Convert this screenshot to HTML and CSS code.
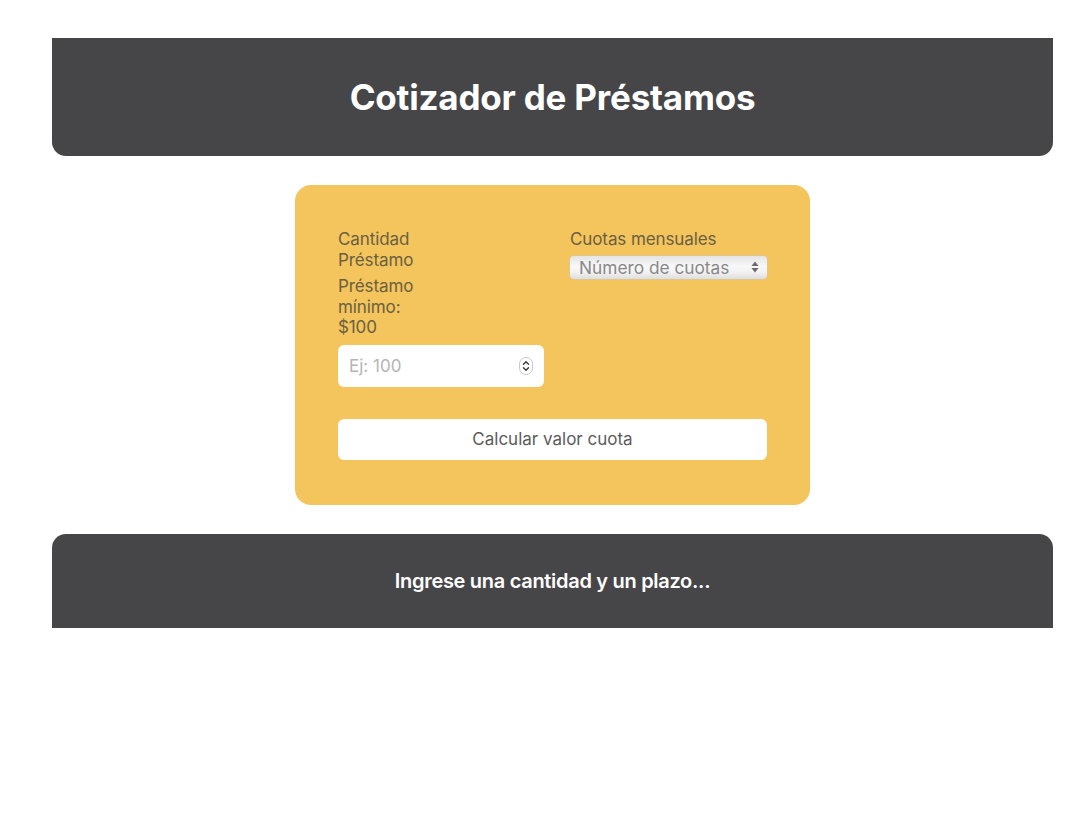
FILE: index.html
```html
<!DOCTYPE html>
<html lang="es">
<head>
<meta charset="utf-8">
<title>Cotizador de Préstamos</title>
<link rel="stylesheet" href="styles.css">
</head>
<body>
<div class="page">
  <header class="header">
    <h1 class="title">Cotizador de Préstamos</h1>
  </header>
  <main class="main">
    <form class="card">
      <div class="fields">
        <div class="col col-left">
          <label class="label">Cantidad Préstamo</label>
          <p class="label hint">Préstamo mínimo: $100</p>
          <div class="input">
            <input class="input-field" type="text" placeholder="Ej: 100">
            <svg class="spin" width="14" height="18" viewBox="0 0 14 18"><rect x="0.5" y="0.5" width="13" height="17" rx="6.5" fill="#fff" stroke="#c9c9c9"/><path d="M4.5 7.2 7 4.8 9.5 7.2" fill="none" stroke="#333" stroke-width="1.3" stroke-linecap="round" stroke-linejoin="round"/><path d="M4.5 10.8 7 13.2 9.5 10.8" fill="none" stroke="#333" stroke-width="1.3" stroke-linecap="round" stroke-linejoin="round"/></svg>
          </div>
        </div>
        <div class="col col-right">
          <label class="label">Cuotas mensuales</label>
          <div class="select">
            <span class="select-text">Número de cuotas</span>
            <svg class="select-arrows" width="8" height="12" viewBox="0 0 8 12"><path d="M4 0.5 7.5 5H0.5Z" fill="#6a6a6a"/><path d="M4 11.5 7.5 7H0.5Z" fill="#6a6a6a"/></svg>
          </div>
        </div>
      </div>
      <button class="button" type="button">Calcular valor cuota</button>
    </form>
  </main>
  <footer class="result">
    <p class="result-text">Ingrese una cantidad y un plazo...</p>
  </footer>
</div>
</body>
</html>
```
FILE: styles.css
```css
* { box-sizing: border-box; }
html, body { margin: 0; padding: 0; background: #fff; }
body { font-family: Inter, "Noto Sans", "Liberation Sans", sans-serif; }

.page {
  width: 1001px;
  margin-left: 52px;
  padding-top: 38px;
  display: flex;
  flex-direction: column;
  align-items: center;
}

.header {
  width: 100%;
  height: 118px;
  background: #464547;
  border-radius: 0 0 14px 14px;
  display: flex;
  align-items: center;
  justify-content: center;
}
.title {
  margin: 0;
  color: #fff;
  font-size: 35px;
  font-weight: 700;
  letter-spacing: -0.2px;
  position: relative;
  top: 0;
}

.main {
  padding: 29px 0;
  display: flex;
  justify-content: center;
  width: 100%;
}

.card {
  width: 515px;
  background: #f4c45d;
  border-radius: 16px;
  padding: 44px 43px 45px 43px;
  margin: 0;
  display: flex;
  flex-direction: column;
  gap: 32px;
}

.fields {
  display: flex;
  gap: 26px;
}
.col { display: flex; flex-direction: column; }
.col-left { width: 206px; }
.col-right { width: 197px; }

.label {
  margin: 0;
  font-size: 17px;
  line-height: 20.5px;
  color: #6a6042;
  width: 100px;
  letter-spacing: -0.1px;
}
.col-right .label { width: auto; }
.hint { margin-top: 6px; }

.input {
  margin-top: 7px;
  height: 42px;
  background: #fff;
  border-radius: 6px;
  display: flex;
  align-items: center;
  padding: 0 11px 0 11px;
}
.input-field {
  flex: 1;
  min-width: 0;
  border: 0;
  outline: 0;
  background: transparent;
  font-family: inherit;
  font-size: 17px;
  color: #333;
  padding: 0;
}
.input-field::placeholder { color: #b5b5b5; }
.spin { flex: none; }

.select {
  margin-top: 6px;
  height: 23px;
  border-radius: 4px;
  background: linear-gradient(#e4e4e4, #f8f8f8 45%, #f2f2f2 70%, #dedede);
  box-shadow: 0 0 0 0.5px #c8c8c8;
  display: flex;
  align-items: center;
  justify-content: space-between;
  padding: 0 8px 0 9px;
}
.select-text {
  font-size: 17.3px;
  color: #888;
}

.button {
  height: 41px;
  border: 0;
  border-radius: 6px;
  background: #fff;
  font-family: inherit;
  font-size: 17px;
  color: #5b5b5b;
  padding: 0;
  cursor: pointer;
}

.result {
  width: 100%;
  height: 94px;
  background: #464547;
  border-radius: 14px 14px 0 0;
  display: flex;
  align-items: center;
  justify-content: center;
}
.result-text {
  margin: 0;
  color: #fff;
  font-size: 20px;
  font-weight: 600;
  letter-spacing: -0.3px;
  position: relative;
  top: 0;
}
```
